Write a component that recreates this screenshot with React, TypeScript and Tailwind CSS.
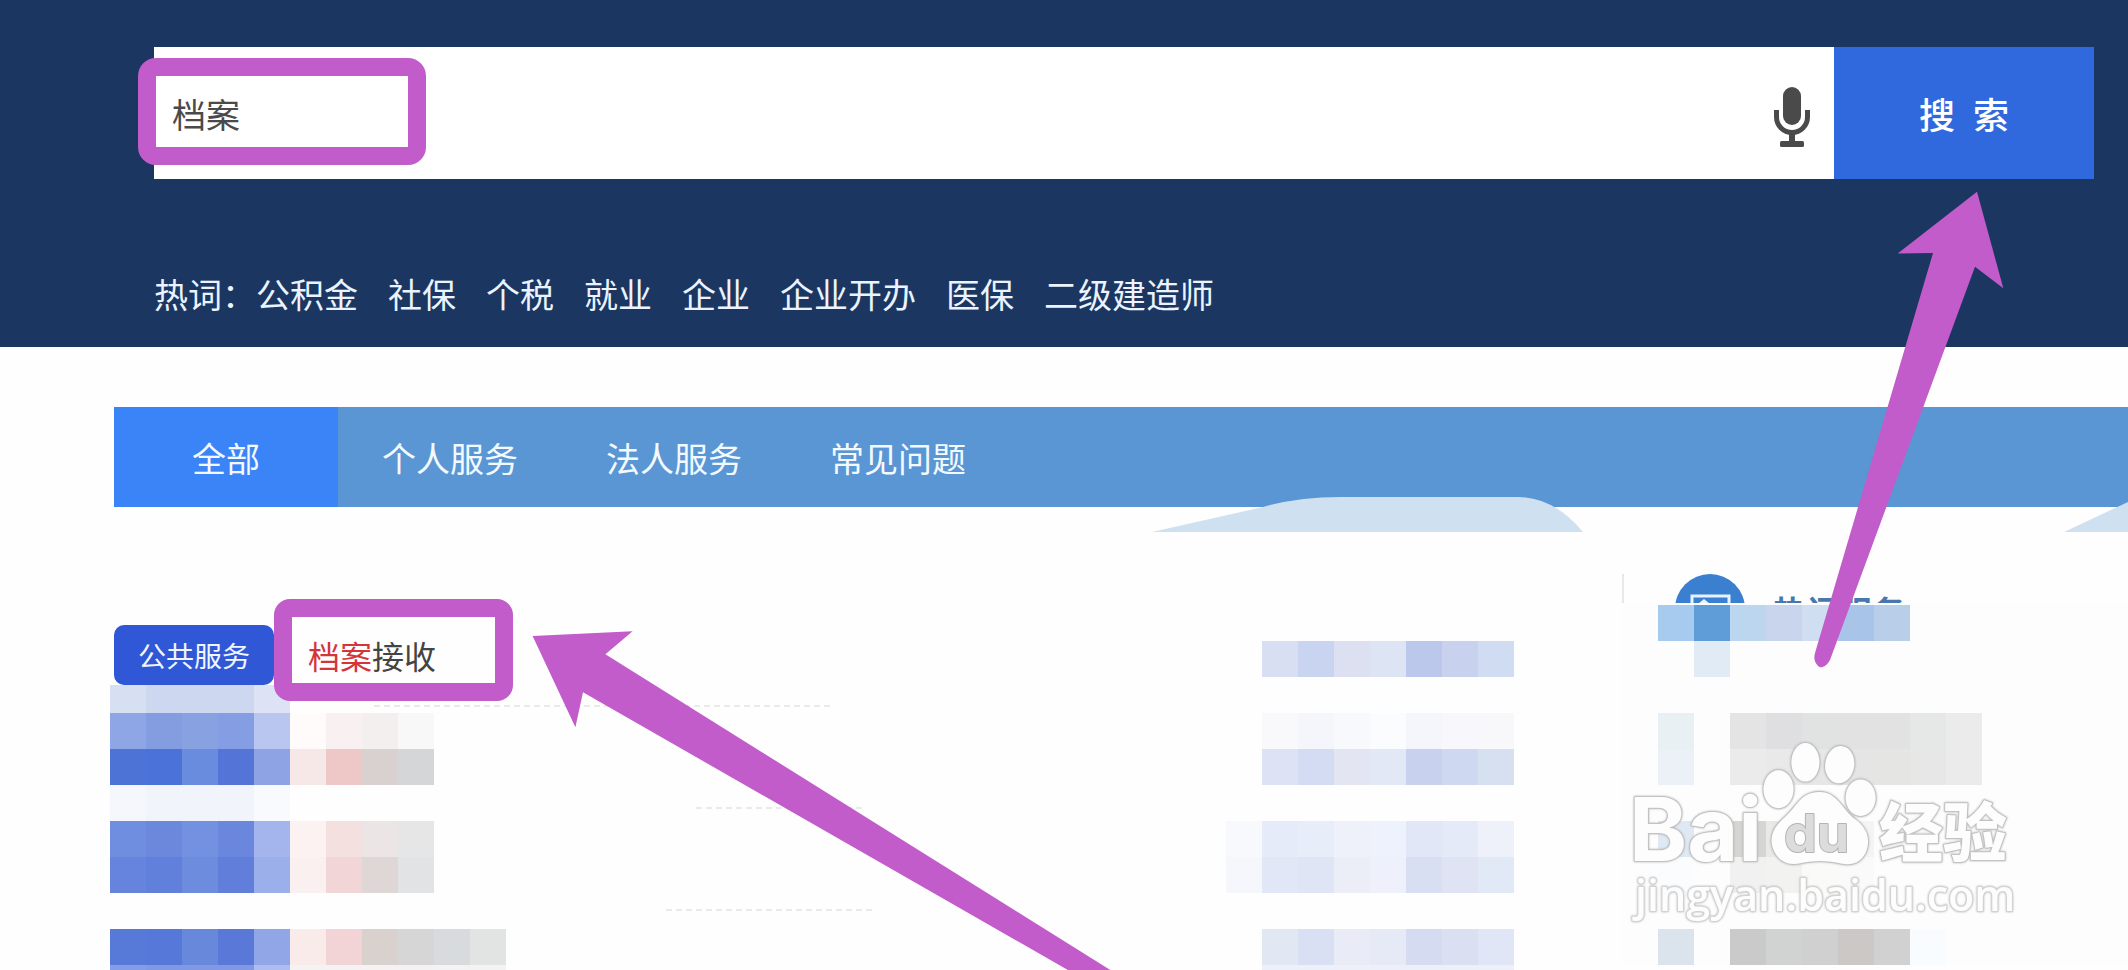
import React from 'react';
import clsx from 'clsx';

const hotWords = ['公积金', '社保', '个税', '就业', '企业', '企业开办', '医保', '二级建造师'];
const tabs = ['全部', '个人服务', '法人服务', '常见问题'];

// Masked content: one colour per 36px cell, '' leaves the cell empty
const labelRows = [
  ['#8fa6e6', '#849de0', '#88a1e1', '#859ee3', '#b8c6f0', '#fffbfb', '#f9f1f1', '#f2efee', '#f8f8f8'],
  ['#4e73d6', '#4b72d8', '#6a8cdf', '#5574d8', '#8da3e3', '#f6e8e6', '#eec7c7', '#d9d1cf', '#d5d6d8'],
  ['#f5f7fc', '#f1f4fa', '#f1f4fa', '#f1f4fa', '#f8fafd'],
  ['#708edf', '#6b88dd', '#7490e0', '#6b86dd', '#a3b5ec', '#fcf2f2', '#f5e0e0', '#ebe6e5', '#e6e6e6'],
  ['#6684de', '#6180dc', '#6d8cde', '#617edb', '#9bafeb', '#faf0f0', '#f2d5d7', '#dfd7d5', '#e2e3e4'],
  [''],
  ['#577ad9', '#5578d9', '#6888dc', '#5a78d8', '#90a6e6', '#f8ebea', '#f2d3d6', '#d8d1ce', '#d6d6d6', '#d8dbde', '#e2e3e3'],
];

const metaRows = [
  ['', '#f9f9fc', '#f5f6fc', '#f8f9fc', '#fbfcfe', '#f5f6fb', '#f8f8fc', '#f8f8fb'],
  ['', '#dde3f4', '#d3dcf3', '#e3e5f3', '#e2e8f6', '#c8d2ee', '#ced8f1', '#d7e0f1'],
  [''],
  ['#f8f9fd', '#e5ebf8', '#e7edf9', '#eff1fa', '#eef2fc', '#e2e7f7', '#e4eaf7', '#eef0fa'],
  ['#f6f7fc', '#e1e7f6', '#dfe5f5', '#ebedf7', '#eef1fb', '#d9dff2', '#dfe3f3', '#e1e8f6'],
  [''],
  ['', '#e2e7f4', '#dae0f3', '#e9ebf7', '#e6e9f6', '#d5dcf1', '#dae0f2', '#e0e6f5'],
];

const sideRows = [
  ['#a7cbef', '#5f9dd9', '#bdd6ef', '#c8d5ec', '#d0def2', '#a9c4e9', '#b9cee9'],
  ['', '#e1ebf6'],
  [''],
  ['#e9f0f4', '', '#e4e4e4', '#dfdfe1', '#e1e2e2', '#e2e2e2', '#e2e2e2', '#e6e7e7', '#ebebeb'],
  ['#ecf1f7', '', '#ebebeb', '#e9e9e9', '#e7e7e7', '#e5e5e5', '#e5e5e3', '#e6e7e6', '#ebebeb'],
  [''],
  ['#dfe9f4', '', '#d5d5d4', '#e9e9e8', '#ececec', '#f4f4f4'],
  ['#fafcfe', '', '#f1f1f1', '#f2f2f1', '#fafaf9', '#fafafa'],
  [''],
  ['#dbe4ed', '', '#cacaca', '#d1d3d2', '#d0d0d0', '#cbc8c5', '#d1d1d1', '#f9fcff'],
];

export default function SearchPage() {
  return (
    <div className="relative min-h-screen overflow-hidden bg-[#fefefe] font-['Noto_Sans_CJK_SC',sans-serif]">
      <header className="bg-[#1b3761] pt-[47px] pb-[29px] pl-[154px] pr-[34px]">
        <form className="relative flex h-[132px]" onSubmit={(e) => e.preventDefault()}>
          <label className="flex min-w-0 flex-1 items-center bg-white pl-[18px]">
            <input
              type="text"
              aria-label="搜索"
              defaultValue="档案"
              className="h-full min-w-0 flex-1 text-[34px] text-[#4a4a4a] outline-none"
            />
          </label>
          <button type="button" aria-label="语音" className="flex w-[60px] items-center bg-white pt-2">
            <MicIcon />
          </button>
          <button type="submit" className="w-[260px] bg-[#2f69dd] text-[36px] font-medium text-white">
            搜&ensp;索
          </button>
          <span className="pointer-events-none absolute top-[11px] -left-4 h-[107px] w-[288px] rounded-[18px] border-[18px] border-[#c15cca]"></span>
        </form>

        <div className="mt-[90px] mb-px flex h-12 items-center text-[34px] text-[#eaf3ff]">
          <span>热词：</span>
          <nav className="flex gap-[30px]">
            {hotWords.map((word) => (
              <a key={word} href="#" className="whitespace-nowrap">{word}</a>
            ))}
          </nav>
        </div>
      </header>

      <div className="relative mt-[60px] pl-[114px]">
        <nav className="flex h-[100px] bg-[#5a96d3]">
          {tabs.map((tab, i) => (
            <button
              key={tab}
              type="button"
              className={clsx('w-[224px] text-[34px] text-[#f3faff]', i === 0 && 'bg-[#3b84f7]')}
            >
              {tab}
            </button>
          ))}
        </nav>
        <svg className="absolute top-[90px] right-0" width="976" height="35" viewBox="0 0 976 35" fill="#cfe0f1">
          <path d="M0 35L111 10Q146 0 188 0H366Q402 0 431 35Z" />
          <path d="M912 35L976 5V35Z" />
        </svg>
      </div>

      <main className="flex pl-[110px]">
        <section className="min-w-0 flex-1 pt-[118px] pr-[108px]">
          <div className="flex h-[60px] justify-between">
            <div className="flex pl-1">
              <span className="flex w-[160px] items-center justify-center rounded-[10px] bg-[#3058d6] text-[28px] text-[#f0f6ff]">
                公共服务
              </span>
              <div className="relative flex items-center pl-[34px]">
                <span className="pointer-events-none absolute -top-[26px] left-0 h-[102px] w-[239px] rounded-2xl border-[18px] border-[#c15cca]"></span>
                <a href="#" className="relative text-[32px] text-[#444]">
                  <em className="text-[#d4343a] not-italic">档案</em>接收
                </a>
              </div>
            </div>
            <div className="pt-4">
              <Mosaic rows={[['#d9dff2', '#c9d4f0', '#dde0f1', '#dde5f5', '#bbc8ec', '#c8d2ee', '#d0dcf1']]} />
            </div>
          </div>

          <div className="flex">
            <div className="w-[256px]">
              <div className="flex h-7">
                <span className="w-9 bg-[#d7dff2]"></span>
                <span className="w-[108px] bg-[#ced7f0]"></span>
                <span className="w-9 bg-[#dde3f4]"></span>
              </div>
              <Mosaic rows={labelRows} />
              <div className="flex h-[5px]">
                <span className="w-9 shrink-0 bg-[#839de8]"></span>
                <span className="w-[108px] shrink-0 bg-[#8099e5]"></span>
                <span className="w-9 shrink-0 bg-[#adbdf1]"></span>
                <span className="w-[216px] shrink-0 bg-[#f4f2f3]"></span>
              </div>
            </div>
            <div className="flex flex-1 flex-col gap-[100px] pt-5">
              <DashedLine className="ml-2 w-[460px]" />
              <DashedLine className="ml-[330px] w-[166px]" />
              <DashedLine className="ml-[300px] w-[208px]" />
            </div>
            <div className="pt-7">
              <Mosaic rows={metaRows} />
              <div className="ml-9 h-[5px] bg-[#edf0f9]"></div>
            </div>
          </div>
        </section>

        <aside className="w-[506px] pt-[67px]">
          <div className="flex h-[29px] gap-7 overflow-hidden border-l-2 border-[#e8e8e8] pl-[51px]">
            <ServiceIcon />
            <h2 className="pt-[19px] text-[33px] leading-9 font-bold whitespace-nowrap text-[#4777ae]">热门服务</h2>
          </div>
          <div className="bg-[#fdfdfd] pt-[2px] pl-9">
            <Mosaic rows={sideRows} />
          </div>
        </aside>
      </main>

      <Watermark />

      {/* Pointer to the search button */}
      <svg className="pointer-events-none absolute top-[191px] right-[124px]" width="190" height="477" viewBox="1814 191 190 477" fill="#c15cca">
        <path d="M1977 191.700L2003.300 288.300L1975 266.700L1830 660C1827 665 1824 667.500 1820 667.300C1816 665 1813 660 1815 653L1933 253L1897.700 253.500Z" />
      </svg>

      {/* Pointer to the first result */}
      <svg className="pointer-events-none absolute top-[631px] left-[532px]" width="579" height="339" viewBox="0 0 579 339" fill="#c15cca">
        <path d="M.6 5L100.600 .3L73.400 23.300L578.300 339H535.900L51 61.300L43.400 96.300Z" />
      </svg>
    </div>
  );
}

function Mosaic({ rows }: { rows: string[][] }) {
  return (
    <div aria-hidden="true">
      {rows.map((row, y) => (
        <div key={y} className="flex h-9">
          {row.map((color, x) => (
            <span key={x} className="size-9 shrink-0" style={{ backgroundColor: color || undefined }}></span>
          ))}
        </div>
      ))}
    </div>
  );
}

function DashedLine({ className }: { className: string }) {
  return (
    <div className={clsx('h-[2px] bg-[repeating-linear-gradient(90deg,#eaeaea_0_6px,transparent_6px_10px)]', className)}></div>
  );
}

function MicIcon() {
  return (
    <svg width="36" height="60" viewBox="0 0 36 60" fill="#4a4a4a">
      <rect x="9" y="0" width="18" height="38" rx="9" />
      <path d="M2.500 23v7a15.500 15.500 0 0 0 31 0v-7" fill="none" stroke="#4a4a4a" strokeWidth="5" />
      <rect x="15" y="46" width="6" height="10" />
      <rect x="6" y="54" width="24" height="6" rx="1.500" />
    </svg>
  );
}

function ServiceIcon() {
  return (
    <svg className="shrink-0" width="70" height="70" viewBox="0 0 70 70">
      <circle cx="35" cy="35" r="35" fill="#3a7fd0" />
      <rect x="17" y="22" width="37" height="30" fill="none" stroke="#e6f3ff" strokeWidth="3" />
      <path d="M24 31l5-4 5 4" fill="none" stroke="#e6f3ff" strokeWidth="3" />
    </svg>
  );
}

function Watermark() {
  return (
    <svg
      className="pointer-events-none absolute top-[735px] right-[108px] drop-shadow-[0_0_1px_#b8b8b8]"
      width="400"
      height="200"
      viewBox="1620 735 400 200"
      fill="#fdfdfd"
      stroke="#c2c2c2"
      strokeWidth="2"
      strokeLinejoin="round"
      paintOrder="stroke"
    >
      <text x="1629" y="861" fontFamily="Inter, sans-serif" fontSize="88" fontWeight="700">Bai</text>
      <ellipse cx="1778.500" cy="789.300" rx="15" ry="19" />
      <ellipse cx="1805.400" cy="762.300" rx="14" ry="19.300" />
      <ellipse cx="1839.700" cy="764.700" rx="14.500" ry="18.700" transform="rotate(8 1839.700 764.700)" />
      <ellipse cx="1860.600" cy="797.700" rx="15" ry="18.300" />
      <path d="M1819.500 792C1838 792 1843 811 1855 819C1867 828 1870 838 1867 849C1863 862 1853 866 1841 863.500C1829 860 1811 860 1799 863.500C1785 866 1775 858 1772 845C1770 833 1776 825 1785 817C1797 807 1800 792 1819.500 792Z" />
      <text x="1784" y="852" fontFamily="Inter, sans-serif" fontSize="52" fontWeight="700" fill="#dcdcdc" stroke="#b4b4b4">du</text>
      <text x="1879" y="856" fontFamily="'Noto Sans CJK SC', sans-serif" fontSize="64" fontWeight="900">经验</text>
      <text x="1635" y="911" fontFamily="'Open Sans', sans-serif" fontSize="43" fontWeight="600" stroke="#d2d2d2">jingyan.baidu.com</text>
    </svg>
  );
}
